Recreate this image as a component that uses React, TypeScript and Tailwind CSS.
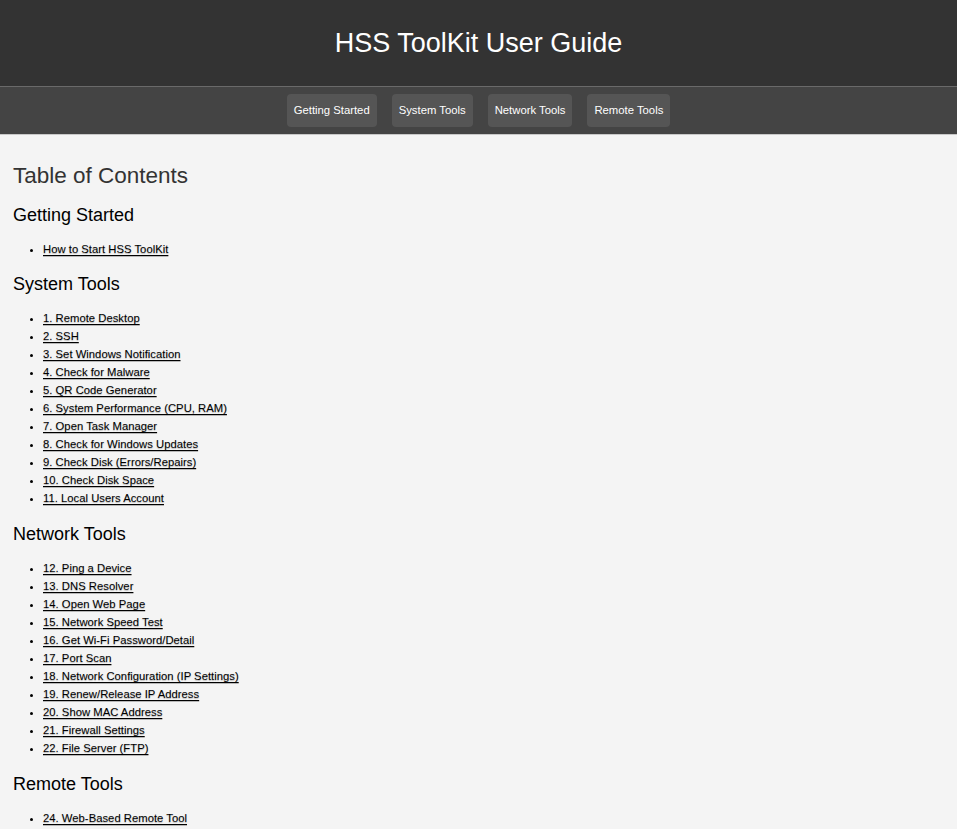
const sections = [
  { title: 'Getting Started', gap: 'mt-[14px]', items: ['How to Start HSS ToolKit'] },
  {
    title: 'System Tools',
    gap: 'mt-[15px]',
    items: [
      '1. Remote Desktop',
      '2. SSH',
      '3. Set Windows Notification',
      '4. Check for Malware',
      '5. QR Code Generator',
      '6. System Performance (CPU, RAM)',
      '7. Open Task Manager',
      '8. Check for Windows Updates',
      '9. Check Disk (Errors/Repairs)',
      '10. Check Disk Space',
      '11. Local Users Account',
    ],
  },
  {
    title: 'Network Tools',
    gap: 'mt-[16px]',
    items: [
      '12. Ping a Device',
      '13. DNS Resolver',
      '14. Open Web Page',
      '15. Network Speed Test',
      '16. Get Wi-Fi Password/Detail',
      '17. Port Scan',
      '18. Network Configuration (IP Settings)',
      '19. Renew/Release IP Address',
      '20. Show MAC Address',
      '21. Firewall Settings',
      '22. File Server (FTP)',
    ],
  },
  { title: 'Remote Tools', gap: 'mt-[16px]', items: ['24. Web-Based Remote Tool'] },
]

const navLinks = ['Getting Started', 'System Tools', 'Network Tools', 'Remote Tools']

export default function App() {
  return (
    <div className="min-h-screen bg-[#f4f4f4] font-['Liberation_Sans',Arial,sans-serif]">
      <header className="h-[87px] bg-[#333] flex items-center justify-center border-b border-[#6a6a6a]">
        <h1 className="text-[27px] text-white leading-none">HSS ToolKit User Guide</h1>
      </header>

      <nav className="h-[48px] bg-[#444] border-b border-[#c8c8c8] flex items-center justify-center gap-[15px]">
        {navLinks.map((label) => (
          <a
            key={label}
            href={`#${label}`}
            className="h-[33px] px-[7px] flex items-center rounded-[4px] bg-[#555] text-white text-[11.3px]"
          >
            {label}
          </a>
        ))}
      </nav>

      <main className="px-[13px] pt-[27px] pb-4">
        <h2 className="text-[22.5px] leading-[28px] text-[#333]">Table of Contents</h2>

        {sections.map((section) => (
          <section key={section.title} className={section.gap}>
            <h3 className="text-[18px] leading-[22px] text-black">{section.title}</h3>
            <ul className="mt-[14px] pl-[30px] list-disc">
              {section.items.map((item) => (
                <li key={item} className="text-[11.3px] leading-[18px] text-black">
                  <a
                    href="#"
                    className="underline decoration-black underline-offset-[2px] [text-shadow:0_1px_1px_rgba(0,0,0,0.25)]"
                  >
                    {item}
                  </a>
                </li>
              ))}
            </ul>
          </section>
        ))}
      </main>
    </div>
  )
}
